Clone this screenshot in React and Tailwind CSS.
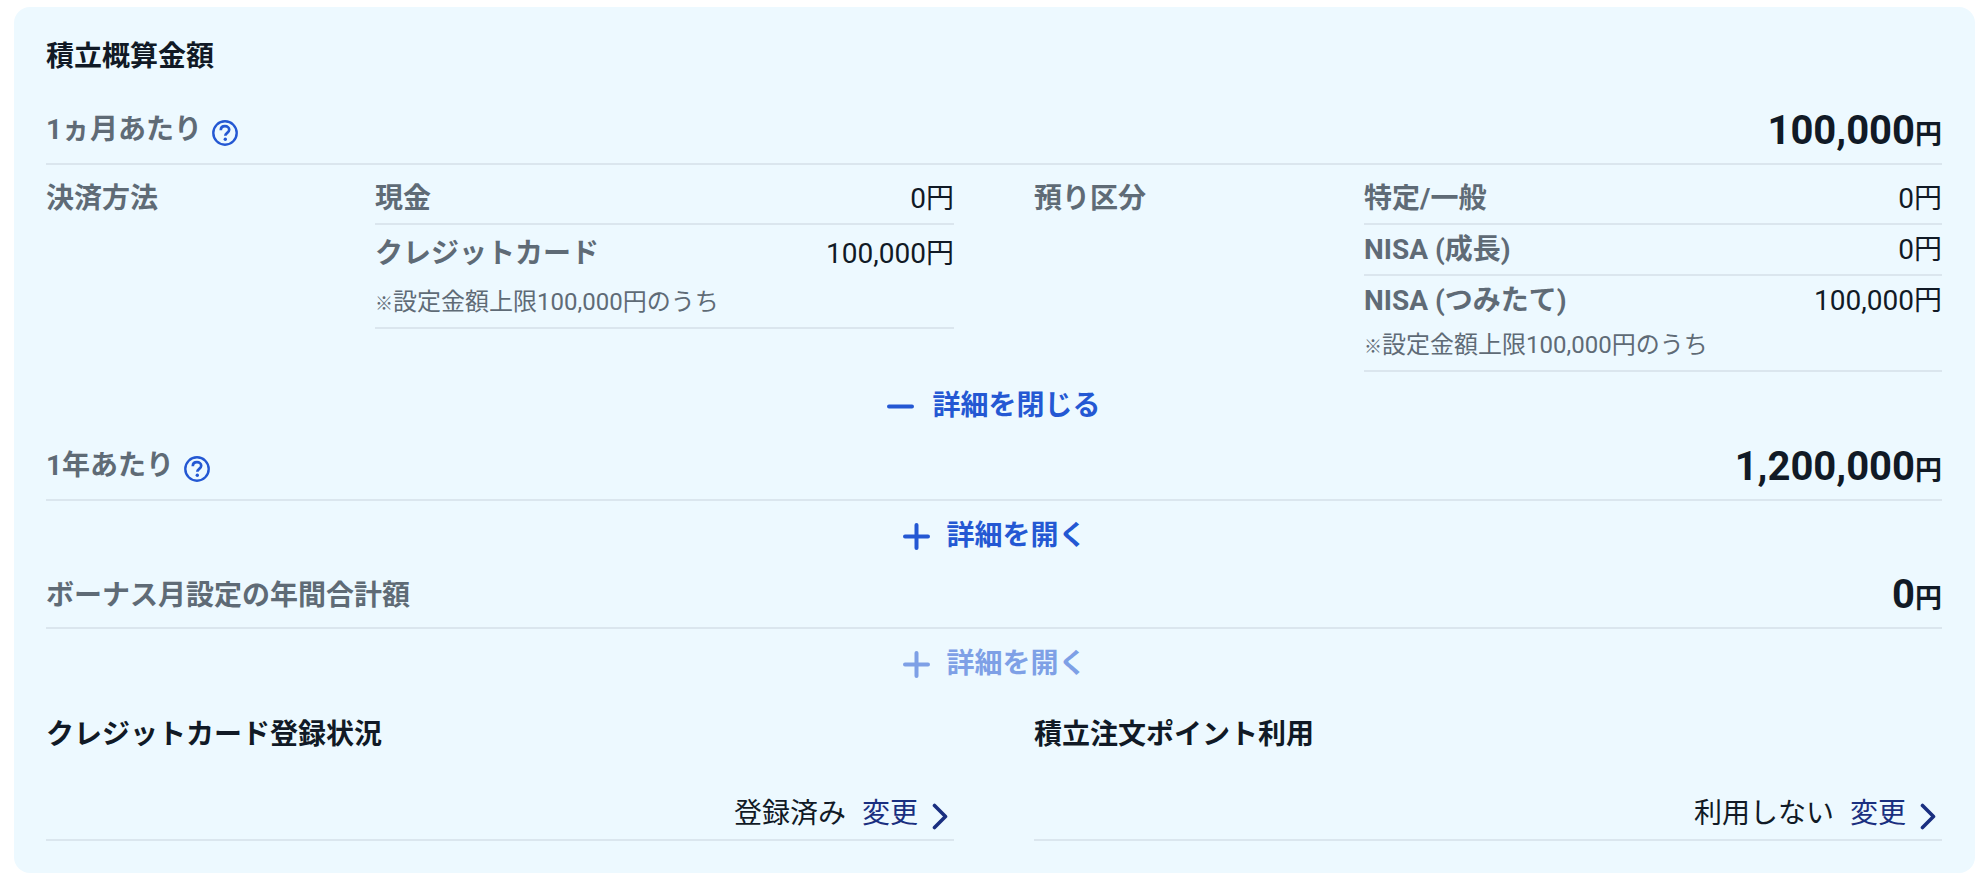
const FONT = "font-['Roboto','Noto_Sans_CJK_JP',sans-serif]";

function Help() {
  return (
    <svg width="26" height="26" viewBox="0 0 26 26" fill="none" className="shrink-0 mt-[5px]">
      <circle cx="13" cy="13" r="11.7" stroke="#2458d3" strokeWidth="2.4" />
      <path d="M8.8 10.2c0-2.5 1.8-4 4.2-4s4.2 1.5 4.2 3.6c0 3-3.9 3-3.9 5.9" stroke="#2458d3" strokeWidth="2.7" />
      <circle cx="13.3" cy="19.3" r="1.7" fill="#2458d3" />
    </svg>
  );
}

function Toggle({ open, faded, className }) {
  return (
    <div className={`flex items-center justify-center pt-[2px] ${open ? "gap-[18px]" : "gap-[16px] pl-[2px]"} ${className} ${faded ? "text-[#7ea0e6]" : "text-[#2458d3]"}`}>
      <svg width="27" height="27" viewBox="0 0 27 27" className="shrink-0" fill="currentColor">
        <rect x="0" y="11.5" width="27" height="4" rx="2" />
        {!open && <rect x="11.5" y="0" width="4" height="27" rx="2" />}
      </svg>
      <span className="text-[28px] leading-[40px] font-bold">{open ? "詳細を閉じる" : "詳細を開く"}</span>
    </div>
  );
}

function Row({ label, amount, help, className, labelClass }) {
  return (
    <div className={`flex items-end justify-between border-b-2 border-[#dbe6ee] ${className}`}>
      <div className={`flex items-center gap-[10px] text-[28px] leading-[40px] font-bold text-[#5f6b76] ${labelClass}`}>
        <span>{label}</span>
        {help && <Help />}
      </div>
      <div className="text-[#111a26] font-bold leading-[48px]">
        <span className="text-[40px]">{amount}</span>
        <span className="text-[27px]">円</span>
      </div>
    </div>
  );
}

function Sub({ label, value, note, className, noteClass }) {
  return (
    <div className={`border-b-2 border-[#dbe6ee] ${className}`}>
      <div className="flex items-center justify-between leading-[36px]">
        <span className="text-[28px] font-bold text-[#5f6b76]">{label}</span>
        <span className="text-[28px] text-[#111a26]">{value}円</span>
      </div>
      {note && (
        <div className={`text-[24px] leading-[34px] text-[#5f6b76] ${noteClass}`}>
          <span className="text-[18px] font-bold">※</span>設定金額上限100,000円のうち
        </div>
      )}
    </div>
  );
}

function Setting({ title, value }) {
  return (
    <div>
      <div className="pt-[18px] text-[28px] leading-[40px] font-bold text-[#111a26]">{title}</div>
      <div className="mt-[39px] flex items-center justify-end border-b-2 border-[#dbe6ee] pb-[5px] pr-[6px] leading-[40px]">
        <span className="text-[28px] text-[#111a26]">{value}</span>
        <span className="ml-[16px] text-[28px] text-[#1a2f80]">変更</span>
        <svg width="16" height="27" viewBox="0 0 16 27" fill="none" className="ml-[14px] mt-[4px]">
          <path d="M2.5 2.5l11 11-11 11" stroke="#1a2f80" strokeWidth="3.6" strokeLinecap="round" strokeLinejoin="round" />
        </svg>
      </div>
    </div>
  );
}

export default function App() {
  return (
    <div className={`h-[886px] bg-white pt-[7px] pl-[14px] pr-[5px] ${FONT}`}>
      <div className="h-[866px] rounded-[16px] bg-[#edf9ff] pl-[32px] pr-[33px]">
        <div className="pt-[30px] h-[68px] text-[28px] leading-[40px] font-bold text-[#111a26]">積立概算金額</div>
        <Row label="1ヵ月あたり" amount="100,000" help className="h-[90px]" labelClass="pb-[13px]" />
        <div className="grid grid-cols-2 gap-x-[80px]">
          <div className="grid grid-cols-[329px_1fr]">
            <div className="pt-[16px] text-[28px] leading-[36px] font-bold text-[#5f6b76]">決済方法</div>
            <div>
              <Sub label="現金" value="0" className="h-[60px] pt-[16px]" />
              <Sub label="クレジットカード" value="100,000" note className="h-[104px] pt-[11px]" noteClass="mt-[13px]" />
            </div>
          </div>
          <div className="grid grid-cols-[330px_1fr]">
            <div className="pt-[16px] text-[28px] leading-[36px] font-bold text-[#5f6b76]">預り区分</div>
            <div>
              <Sub label="特定/一般" value="0" className="h-[60px] pt-[16px]" />
              <Sub label="NISA (成長)" value="0" className="h-[51px] pt-[7px]" />
              <Sub label="NISA (つみたて)" value="100,000" note className="h-[96px] pt-[7px]" noteClass="mt-[9px]" />
            </div>
          </div>
        </div>
        <Toggle open className="h-[66px]" />
        <Row label="1年あたり" amount="1,200,000" help className="h-[63px]" labelClass="pb-[13px]" />
        <Toggle className="h-[68px]" />
        <Row label="ボーナス月設定の年間合計額" amount="0" className="h-[60px]" labelClass="pb-[11px]" />
        <Toggle faded className="h-[68px]" />
        <div className="grid grid-cols-2 gap-x-[80px]">
          <Setting title="クレジットカード登録状況" value="登録済み" />
          <Setting title="積立注文ポイント利用" value="利用しない" />
        </div>
      </div>
    </div>
  );
}
